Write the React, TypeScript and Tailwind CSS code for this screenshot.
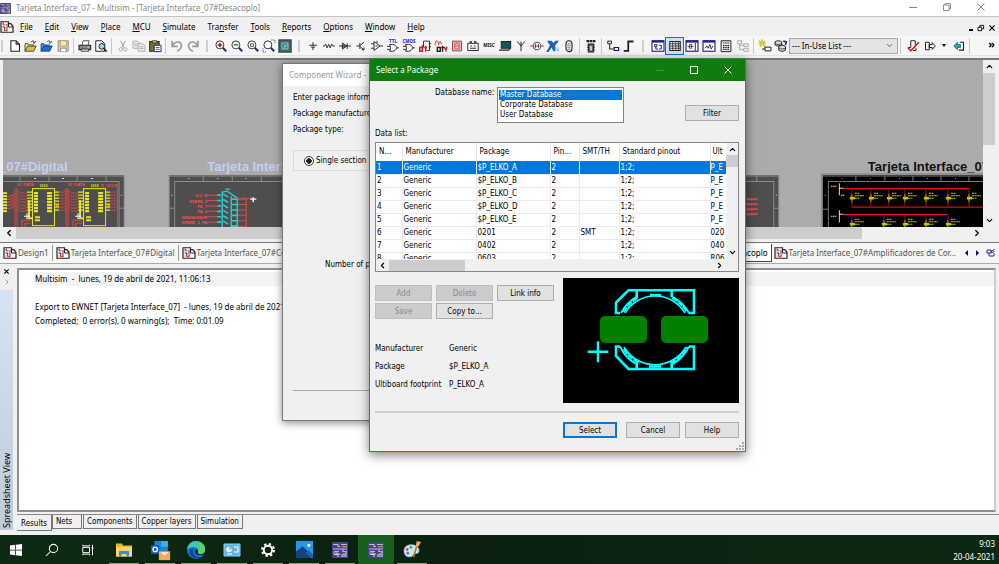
import type { ReactNode } from "react";
import { ChevronDown, ChevronLeft, ChevronRight, ChevronUp } from "lucide-react";

const menus = [
  ["", "F", "ile"],
  ["", "E", "dit"],
  ["", "V", "iew"],
  ["", "P", "lace"],
  ["", "M", "CU"],
  ["", "S", "imulate"],
  ["Tra", "n", "sfer"],
  ["", "T", "ools"],
  ["", "R", "eports"],
  ["", "O", "ptions"],
  ["", "W", "indow"],
  ["", "H", "elp"],
];

const packages = [
  { id: 1, name: "$P_ELKO_A", smt: "", ult: "P_E" },
  { id: 2, name: "$P_ELKO_B", smt: "", ult: "P_E" },
  { id: 3, name: "$P_ELKO_C", smt: "", ult: "P_E" },
  { id: 4, name: "$P_ELKO_D", smt: "", ult: "P_E" },
  { id: 5, name: "$P_ELKO_E", smt: "", ult: "P_E" },
  { id: 6, name: "0201", smt: "SMT", ult: "020" },
  { id: 7, name: "0402", smt: "", ult: "040" },
  { id: 8, name: "0603", smt: "", ult: "R06" },
];

const ui = "font-['Noto_Sans','Open_Sans',sans-serif]";
const tahoma = "font-['DejaVu_Sans_Condensed','DejaVu_Sans',sans-serif]";

function Svg({ children, className = "size-4" }: { children: ReactNode; className?: string }) {
  return (
    <svg viewBox="0 0 16 16" fill="none" stroke="#222" strokeWidth="1" className={`overflow-visible ${className}`} aria-hidden="true">
      {children}
    </svg>
  );
}

function Tool({ label, wide, on, children }: { label: string; wide?: boolean; on?: boolean; children: ReactNode }) {
  return (
    <button
      type="button"
      aria-label={label}
      className={`flex h-4 shrink-0 items-center justify-center ${wide ? "w-[17px]" : "w-4"} ${
        on ? "bg-[#cce4f7] outline outline-[#0078d7]" : ""
      }`}
    >
      <Svg className="size-3">{children}</Svg>
    </button>
  );
}

const Sep = () => <span className="mr-[3px] ml-[2px] h-4 w-0 shrink-0 border-l border-[#c8c8c8]" />;
const Grip = () => <span className="mx-[5px] h-3 w-[2px] shrink-0 bg-[#cfcfcf]" />;

function Lens({ mark, children }: { mark?: string; children?: ReactNode }) {
  return (
    <>
      <path d="M10 10l5 5" stroke="#1c2a8c" strokeWidth="2.6" />
      <circle cx="6.5" cy="6.5" r="5.3" fill="#fff" stroke="#333" strokeWidth="1.3" />
      {mark && <path d={mark} strokeWidth="2" stroke="#b01020" />}
      {children}
    </>
  );
}

function Gate({ text }: { text: string }) {
  return (
    <>
      <text x="8" y="4" fontSize="6" fontWeight="bold" textAnchor="middle" fill="#1010e0" stroke="none">
        {text}
      </text>
      <path d="M3.5 6h4c3 0 5 2 5.500 4.500-1 2.500-3 4.500-5.500 4.500h-4c1.500-3 1.500-6 0-9zM0 8.500h4M0 12.500h4M13 10.500h3" strokeWidth="1.200" />
    </>
  );
}

function Win({ children }: { children: ReactNode }) {
  return (
    <>
      <rect x="0" y="1" width="16" height="14" fill="#fff" stroke="#23238e" strokeWidth="1.5" />
      <path d="M0 2h16" stroke="#23238e" strokeWidth="3" />
      {children}
    </>
  );
}

function SheetIcon() {
  return (
    <Svg className="size-3 shrink-0">
      <path d="M0 1h10v2.500h3l3 3.500v8H0z" fill="#fff" strokeWidth="1.600" />
      <path d="M10 3.500V8h6" strokeWidth="1.300" />
      <path d="M2 5h4M8 4v5M4 13h4V9" stroke="#e01818" strokeWidth="1.500" />
      <path d="M2 3h2M2 8h3v4M2 12h1" strokeWidth="1.300" />
    </Svg>
  );
}

function MultisimIcon({ className }: { className: string }) {
  return (
    <Svg className={className}>
      <rect width="16" height="16" rx="1" fill="#4a4283" stroke="none" />
      <path d="M1 2.500h5v2h2M9 2.500h6M1 7h14M11 7v2M2 9.500h5" stroke="#b9b6e2" strokeWidth="1.100" />
      <path d="M2 12.500h3v-2M6 15v-3h2M10 15v-3M12 15v-4M14 15v-5" stroke="#d4d2f2" strokeWidth="1.100" />
      <path d="M10 4.700h5M1 11h4M10 9.500h5" stroke="#d9a860" strokeWidth="1" />
    </Svg>
  );
}

function Toolbar() {
  return (
    <div className="flex h-5 shrink-0 items-center overflow-hidden border-b border-[#e2e2e2] bg-[#f6f6f6]">
      <span className="mr-1 ml-px h-3 w-[2px] shrink-0 bg-[#cfcfcf]" />
      <Tool label="New">
        <path d="M2.500 1h7l4.500 4.500V15H2.500zM9.500 1v4.500H14" fill="#fff" strokeWidth="1.400" />
      </Tool>
      <Tool label="Open">
        <path d="M0 15V5h4l1 1.500h6V8" fill="#ffef7a" />
        <path d="M0 15l3.500-7H15l-3.500 7z" fill="#d8c040" />
        <path d="M8 3c2-3 4-1.500 5 .5l1.500-2M13 4h-2.500" strokeWidth="1.300" />
      </Tool>
      <Tool label="Open sample">
        <path d="M0 15V5h4l1 1.500h6V8" fill="#4f95e8" stroke="#123a80" />
        <path d="M0 15l3.500-7H15l-3.500 7z" fill="#1d6ad0" stroke="#123a80" />
        <path d="M8 3c2-3 4-1.500 5 .5l1.500-2M13 4h-2.500" stroke="#123a80" strokeWidth="1.300" />
      </Tool>
      <Tool label="Save">
        <path d="M1.500 1h13.500v14H1.500z" fill="#cfcfc0" stroke="#777" />
        <path d="M4.500 1h8v7h-8z" fill="#fff46b" stroke="#999" />
        <path d="M5 15v-4h7v4" fill="#fff" stroke="#777" />
      </Tool>
      <Sep />
      <Tool label="Print">
        <path d="M4 7l1.500-6H13.500L12 7" fill="#fff" />
        <path d="M0 7h15.500v6H0z" fill="#8a8a80" strokeWidth="1.400" />
        <path d="M3 12h10v3H3z" fill="#ddd" />
        <path d="M11 9.500h3" stroke="#e5d640" strokeWidth="1.500" />
      </Tool>
      <Tool label="Print preview">
        <path d="M1 1h8l4 4v10H1z" fill="#fff" strokeWidth="1.300" />
        <circle cx="9" cy="8.500" r="3.800" fill="#9adbe0" strokeWidth="1.300" />
        <path d="M11.500 11l4 4.500" strokeWidth="2.200" />
      </Tool>
      <Sep />
      <Tool label="Cut">
        <path d="M5 1l4.500 9M11 1L6.500 10" stroke="#999" strokeWidth="1.300" />
        <circle cx="5" cy="12.500" r="2.300" stroke="#999" />
        <circle cx="11" cy="12.500" r="2.300" stroke="#999" />
      </Tool>
      <Tool label="Copy">
        <path d="M0 1.500h6L8.500 4v7H0zM2 5h4M2 7.500h4" fill="#eee" stroke="#999" />
        <path d="M7 5h6l3 2.500V15H7zM9 9h5M9 11.500h5" fill="#eee" stroke="#999" />
      </Tool>
      <Tool label="Paste">
        <path d="M1 2h12.500v13H1z" fill="#7b7428" strokeWidth="1.400" />
        <path d="M4.500 1h6v3h-6z" fill="#e8d94a" />
        <path d="M7 7h9v8.500H7z" fill="#fff" stroke="#1c2a8c" strokeWidth="1.300" />
        <path d="M9 10h5M9 12.500h5" stroke="#1c2a8c" />
      </Tool>
      <Sep />
      <Tool label="Undo">
        <path d="M1.500 1v7.500H9M2 8c3-7 11-7 12-.5 0 3.500-2 5.500-6 7.500" stroke="#9a9a9a" strokeWidth="2.200" />
      </Tool>
      <Tool label="Redo">
        <path d="M14.500 1v7.500H7M14 8C11 1 3 1 2 7.500c0 3.500 2 5.500 6 7.500" stroke="#9a9a9a" strokeWidth="2.200" />
      </Tool>
      <Grip />
      <Tool label="Zoom in">
        <Lens mark="M3.500 6.500h6M6.500 3.500v6" />
      </Tool>
      <Tool label="Zoom out">
        <Lens>
          <path d="M3.500 6.500h6" stroke="#1c8c2c" strokeWidth="2" />
        </Lens>
      </Tool>
      <Tool label="Zoom area">
        <Lens>
          <path d="M4.500 5h4v3.500h-4z" />
        </Lens>
      </Tool>
      <Tool label="Zoom sheet">
        <Lens />
        <path d="M11 0h5v5M0 11v5h5" strokeDasharray="1.500 1" />
      </Tool>
      <Tool label="Full screen">
        <rect x="0" y="0" width="16" height="16" fill="#3c6f70" strokeWidth="2" stroke="#444" />
        <path d="M4 4h8v8H4zM7 12V7h5M7 9h3" stroke="#a7e3e0" />
      </Tool>
      <Grip />
      <Tool label="Place source">
        <path d="M3 7h10M5.500 9.500h5M8 3v4M8 9.500v4" strokeWidth="1.300" />
      </Tool>
      <Tool label="Place basic">
        <path d="M0 8h2l1.500-2.500 2 5 2-5 2 5 2-5 1.500 2.500h3" strokeWidth="1.200" />
      </Tool>
      <Tool label="Place diode">
        <path d="M0 8h16M4.500 4v8l6-4zM11 4v8" strokeWidth="1.200" fill="#888" />
      </Tool>
      <Tool label="Place transistor">
        <path d="M2 8h4M6.500 4v8M7 7l5-4M7 9l5 4M9 13h3v-3" strokeWidth="1.300" />
      </Tool>
      <Tool label="Place analog">
        <path d="M4 2v12l8-6zM0 5h4M0 11h4M12 8h4M6 8h3M8 1v3" strokeWidth="1.200" />
      </Tool>
      <Tool label="Place TTL">
        <Gate text="TTL" />
      </Tool>
      <Tool label="Place CMOS">
        <Gate text="CMOS" />
      </Tool>
      <Tool label="Place misc digital">
        <path d="M6 10V1.500h8V14h-3M13 5h3M13 9h3" strokeWidth="1.200" />
        <path d="M4.500 7v8H1v-5h3.500M9 8v7.500M7 10h3.500" stroke="#e01818" strokeWidth="2" />
      </Tool>
      <Tool label="Place mixed">
        <path d="M0 7c1-8 4-8 5 0M5 5l2-3 2 4" stroke="#e01818" strokeWidth="1.200" />
        <path d="M3 10h4v5H3zM10 8v7.500M8.500 10h3.500" strokeWidth="1.800" />
        <path d="M12.500 9l2 5 1.500-5" stroke="#e01818" strokeWidth="1.800" />
      </Tool>
      <Tool label="Place indicator">
        <path d="M2 1.500h12v13H2z" fill="#f7b8b8" stroke="#443030" />
        <path d="M5 4h6v8H5zM5 8h6" stroke="#e05050" strokeWidth="1.200" />
      </Tool>
      <Tool label="Place power">
        <path d="M1 4.500h14V14H1zM4 4V2h2v2M10 4V2h2v2M4.500 8h2M9.500 8h2M4 11h8" strokeWidth="1.200" />
      </Tool>
      <Tool label="Place misc">
        <text x="8" y="9" fontSize="6" fontWeight="bold" textAnchor="middle" fill="#111" stroke="none">
          MISC
        </text>
      </Tool>
      <Tool label="Place peripheral">
        <path d="M3 2h12.500v9H3z" fill="#0b5a5e" strokeWidth="1.400" />
        <path d="M0 13.500h13l2-2.500" strokeWidth="1.600" />
      </Tool>
      <Tool label="Place RF">
        <path d="M8 15V2M3 2l5 6 5-6" strokeWidth="1.300" />
      </Tool>
      <Tool label="Place electromechanical">
        <path d="M-1 8h4M13 8h4" stroke="#e01818" strokeWidth="1.300" />
        <circle cx="8" cy="8" r="5" stroke="#555" strokeWidth="1.400" />
        <path d="M5 8h6M6 5.500v5M10 5.500v5" />
      </Tool>
      <Tool label="Place NI">
        <path d="M0 1h6l2.500 3L11 1h5l-5 6v8H8.500L6 10l-4 6H-1l5-9z" fill="#1d62b8" stroke="none" />
        <path d="M11 15v-5l4 5v-5" stroke="#6d9ed8" />
      </Tool>
      <Tool label="Place connector">
        <rect x="4" y="1" width="8" height="14.500" rx="4" strokeWidth="1.400" />
        <path d="M6.800 4v9M9.200 4v9" strokeDasharray="1.500 1" />
      </Tool>
      <Sep />
      <Tool label="Place MCU">
        <path d="M2 1.500h12" strokeWidth="3" strokeDasharray="3.500 .7" />
        <path d="M4.500 5.500h7V16h-7zM3 7h1M3 10h1M3 13h1M12 7h1M12 10h1M12 13h1" fill="#666" strokeWidth="1.400" />
        <path d="M8 8v6" stroke="#fff" strokeWidth="1.800" />
      </Tool>
      <Sep />
      <Tool label="Hierarchical block">
        <path d="M1 1.500h5v3.500H1zM3.500 5v7H9" strokeWidth="1.300" />
        <path d="M9.500 10h6v4h-6z" stroke="#1010a0" strokeWidth="1.500" />
      </Tool>
      <Tool label="Bus">
        <path d="M1 14.500h6V2h7" strokeWidth="2.400" />
      </Tool>
      <Grip />
      <Tool label="Design toolbox" wide>
        <Win>
          <path d="M3.500 6h3v3h-3zM5 9v3h3M9 7h3.500v5H9" strokeWidth="1.200" />
        </Win>
      </Tool>
      <Tool label="Spreadsheet view" wide on>
        <path d="M1 2h14v12H1z" fill="#fff" strokeWidth="1.400" />
        <path d="M1 5h14M1 8h14M1 11h14M5 2v12M9 2v12M12.500 2v12" strokeWidth="1.100" />
      </Tool>
      <Tool label="Database manager" wide>
        <Win>
          <path d="M2 8.500h8M4.500 6v5h3V6z" />
          <path d="M12.500 4v11" stroke="#e01818" strokeWidth="1.600" />
        </Win>
      </Tool>
      <Tool label="Grapher" wide>
        <Win>
          <path d="M3 11l2-3 2 3 2-5 2 6 2-4" strokeWidth="1.200" />
        </Win>
      </Tool>
      <Tool label="Postprocessor" wide>
        <path d="M1.500 1h13v14.500h-13z" fill="#eee" strokeWidth="1.300" />
        <path d="M4 4h8M4 7.500h8M4 10h8M4 12.500h8" strokeDasharray="2 1" strokeWidth="1.500" />
      </Tool>
      <Tool label="Parent sheet" wide>
        <path d="M1 1h5v4H1zM9 5h6v3.500H9zM9 11h6v4H9zM3.500 5v8H9M3.500 7H9" stroke="#aaa" strokeWidth="1.300" />
      </Tool>
      <Sep />
      <Tool label="Create component">
        <path d="M0 1l3 3M8 1L5 4M4-1v4M-1 5h10M1 9l2.500-3M8 9L5.500 6" stroke="#c9b800" strokeWidth="1.600" />
        <path d="M8 9.500h8v5H8zM4 12h4" strokeWidth="1.300" />
      </Tool>
      <Tool label="Database">
        <path d="M0 2.500c2-2 7-2 9 0v4c-2 2-7 2-9 0zM5 8.500c2-2 7-2 9 0v5c-2 2-7 2-9 0z" fill="#ddd" strokeWidth="1.300" />
        <path d="M0 4.500c2 2 7 2 9 0M5 10.500c2 2 7 2 9 0" />
        <path d="M11 1.500l4 1-1 4" stroke="#1c2a8c" strokeWidth="2.200" />
      </Tool>
      <label className="relative flex w-[109px] shrink-0 items-center">
        <select
          aria-label="In-Use List"
          className="h-4 w-full appearance-none border border-[#a8a8a8] bg-[#e3e3e3] pl-[2px] text-[8px] leading-[13px] text-black"
        >
          <option>--- In-Use List ---</option>
        </select>
        <ChevronDown className="pointer-events-none absolute right-1 size-[9px] text-[#444]" />
      </label>
      <Sep />
      <Tool label="Electrical rules check" wide>
        <path d="M5 1h6v8M5 1v9H2M8 14h4v-3" strokeWidth="1.300" />
        <path d="M1 10l4 4.500L16 3" stroke="#e01818" strokeWidth="2" />
      </Tool>
      <Tool label="Transfer to Ultiboard" wide>
        <path d="M2 3h5v10H2zM7 6h4V3.500L15 8l-4 4.500V10H7z" strokeWidth="1.300" />
      </Tool>
      <span className="mx-1 border-x-2 border-t-3 border-x-transparent border-t-black" />
      <Tool label="Back annotate" wide>
        <path d="M1 8l5-5v3h4v4H6v3z" fill="#1da3a8" stroke="#0c6b70" />
        <path d="M9 3h5v10.500H8" strokeWidth="1.400" />
      </Tool>
      <Sep />
      <button type="button" aria-label="More buttons" className="mr-1 ml-auto shrink-0 pb-1 text-[11px] leading-3 font-bold">
        »
      </button>
    </div>
  );
}

function Chip({ x }: { x: number }) {
  const pins = [0, 1, 2, 3, 4, 5, 6];
  return (
    <g>
      <text x={x - 15} y="186" fontSize="4" fontWeight="bold" fill="#ff4d4d">
        DI_DATA
      </text>
      <text x={x + 8} y="187" fontSize="4" fontWeight="bold" fill="#e5e526">
        U12
      </text>
      <path d={`M${x - 17} 188v39M${x - 15} 188v39`} stroke="#e04848" />
      {pins.map((p) => (
        <g key={p}>
          <path d={`M${x - 15} ${190 + p * 3}l3 3h7`} stroke="#e04848" fill="none" strokeWidth=".8" />
          <path d={`M${x - 5} ${192 + p * 3}h5M${x + 22} ${192 + p * 3}h5`} stroke="#e5e526" strokeWidth="1.200" />
          <path d={`M${x + 27} ${192 + p * 3}h5l3 -2`} stroke="#e04848" fill="none" strokeWidth=".8" />
          <path d={`M${x + 2} ${193 + p * 3}h4M${x + 15} ${193 + p * 3}h5`} stroke="#e5e526" strokeWidth="2.400" />
        </g>
      ))}
      <rect x={x + 0.5} y="188.500" width="22" height="37" fill="none" stroke="#e5e526" />
      <path d={`M${x - 3} 200v18h3M${x + 3} 217h5M${x + 3} 220h5`} stroke="#e5e526" fill="none" strokeWidth="2" />
      <path d={`M${x - 5} 213v4M${x - 8} 216h6M${x - 6} 218h2`} stroke="#fff" />
      <path d={`M${x - 10} 227v-7h8M${x - 7} 227v-4h6`} stroke="#e04848" fill="none" />
      <path d={`M${x + 24} 205h3v3h-3z`} fill="#f0a020" />
    </g>
  );
}

function Cap({ x, y }: { x: number; y: number }) {
  return (
    <g stroke="#c8c800">
      <path d={`M${x} ${y - 9}v17`} stroke="#a01010" />
      <path d={`M${x - 2} ${y}h5`} strokeWidth="2.600" />
      <path d={`M${x} ${y - 4}v8`} strokeWidth=".8" />
      <path d={`M${x + 3} ${y - 5}h5`} strokeDasharray="2 .5" />
      <path d={`M${x + 3} ${y - 2.500}h9M${x + 3} ${y}h5`} strokeDasharray="2 .5" />
    </g>
  );
}

// open schematic sheets, seen side by side on the workspace canvas
function Workspace() {
  return (
    <svg
      viewBox="3 60 979 167"
      preserveAspectRatio="xMinYMin slice"
      className="block h-[167px] w-full bg-[#ababab]"
      role="img"
      aria-label="Schematic workspace"
      fontFamily="Liberation Sans, Arial, sans-serif"
    >
      <text x="-1" y="171" fontSize="13" fontWeight="bold" fill="#c5cfee">
        _07#Digital
      </text>
      <text x="207" y="171" fontSize="13" fontWeight="bold" fill="#c5cfee">
        Tarjeta Interface
      </text>
      <rect x="3" y="175" width="121" height="54" fill="#4e4e4e" />
      <path d="M3 176h121M3 181.500h116v48M124 176v54M20 176v5M49 176v5M77 176v5M106 176v5M119 208h5" stroke="#8c8c8c" fill="none" />
      <path d="M34 178.500h2M62 178.500h2M91 178.500h2M121 195h1" stroke="#ddd" />
      {[0, 1, 2, 3, 4, 5, 6].map((p) => (
        <path key={p} d={`M3 ${193 + p * 3}h4`} stroke="#e5e526" strokeWidth="2" />
      ))}
      <path d="M7 196h4l4-3M7 199h4l4-3M7 202h4l4-3M7 205h4l4-3M7 208h4l4-3" stroke="#e04848" fill="none" />
      <Chip x={32} />
      <Chip x={83} />
      <path d="M117.500 186v41" stroke="#e04848" />
      <text x="101" y="187" fontSize="4" fontWeight="bold" fill="#ff4d4d">
        D_VCCR
      </text>

      <rect x="169" y="175" width="609" height="54" fill="#4e4e4e" />
      <path d="M169 176h609M174.500 229v-47.500H773v47.500M169 175v54M778 175v54M203 176v5M232 176v5M261 176v5M756 176v5M169 208h5M773 208h5" stroke="#8c8c8c" fill="none" />
      <path d="M188 178.500h1M217 178.500h1M245 178.500h1M171 195h1M775 195h1" stroke="#ddd" />
      {["D.1_N", "SPARE_0", "PA_7", "PA_6", "GND/AGND/R", "SPARE_2_PA"].map((t, i) => (
        <g key={t}>
          <text x="207" y={197 + i * 5.4} fontSize="4" fontWeight="bold" textAnchor="end" fill="#ff4d4d">
            {t}
          </text>
          <path d={`M207 ${195 + i * 5.4}h10M238 ${199 + i * 5.4}h8`} stroke="#e04848" />
          <path d={`M217 ${195 + i * 5.4}h4M223 ${194 + i * 5.4}l5 3M231 ${199 + i * 5.4}h7`} stroke="#35c9cf" strokeWidth="1.600" />
        </g>
      ))}
      <path d="M222 227v-35l5-1 10 7v29M231 196v31M225 189h5" stroke="#35c9cf" fill="none" strokeWidth="1.400" />
      <path d="M235 198h16M246 198v29" stroke="#e04848" fill="none" />
      <path d="M250 199h6M253 197v5" stroke="#fff" strokeWidth="1.400" />
      <path d="M746 199h6M746 204h6M746 209h6M746 214h6" stroke="#ff4d4d" strokeWidth="2" strokeDasharray="3 .6" />
      <path d="M752 199h5M752 204h5M752 209h5M752 214h5" stroke="#e04848" strokeWidth="1.600" />

      <text x="867" y="171" fontSize="13" fontWeight="bold" fill="#111">
        Tarjeta Interface_07
      </text>
      <rect x="820" y="173" width="170" height="60" fill="#8f8f8f" />
      <rect x="822" y="175" width="170" height="54" fill="#000" />
      <path d="M822 176h160M827.500 229v-47.500H982M855 176v5M884 176v5M912 176v5M940 176v5M968 176v5M822 209h5" stroke="#777" fill="none" />
      <path d="M841 178.500h1M869 178.500h1M898 178.500h1M926 178.500h1M954 178.500h1M824 195h1" stroke="#999" />
      <path d="M830 186h6M840 195h4M830 216h6" stroke="#ddd" strokeDasharray="1.500 .5" />
      <path d="M838.500 183v12M838.500 210v12M839 188h4M839 214h4" stroke="#ddd" />
      <path d="M842 188.500h126.500M842 214.500h105" stroke="#ff1010" strokeWidth="1.400" />
      <path d="M851 207h131" stroke="#a00808" strokeWidth="1.800" />
      {[851, 870, 888, 904, 925, 947, 968].map((x) => (
        <Cap key={x} x={x} y={198} />
      ))}
      {[851, 883, 904, 925, 947].map((x) => (
        <Cap key={x} x={x} y={224} />
      ))}
    </svg>
  );
}

function SheetTab({ children }: { children: ReactNode }) {
  return (
    <button type="button" className="flex h-4 shrink-0 items-center gap-[2px] border-r border-[#999] pr-[3px] pl-1 text-[#555]">
      <SheetIcon />
      <span>{children}</span>
    </button>
  );
}

function WizardWindow() {
  return (
    <section className="absolute top-[63px] left-[282px] w-[420px] border border-[#777] bg-[#f0f0f0] leading-4 shadow-[0_2px_8px_rgba(0,0,0,0.45)]">
      <h2 className="h-[22px] bg-white pl-[6px] leading-[22px] text-[#999]">Component Wizard -</h2>
      <div className={`${tahoma} h-[334px] px-[10px] pt-1`}>
        <p>Enter package information</p>
        <p>Package manufacturer:</p>
        <p>Package type:</p>
        <fieldset className="mt-3 flex h-[21px] items-center border border-[#dcdcdc] pl-[10px]">
          <label className="flex items-center gap-[2px]">
            <input
              type="radio"
              defaultChecked
              className="size-[10px] appearance-none rounded-full border border-[#333] bg-white bg-[radial-gradient(circle,#222_2.5px,transparent_3px)]"
            />
            Single section component
          </label>
        </fieldset>
        <p className="mt-[86px] pl-8">Number of pins:</p>
        <hr className="mt-[117px] border-[#a8a8a8]" />
      </div>
    </section>
  );
}

function DialogButton({ children, disabled, main }: { children: ReactNode; disabled?: boolean; main?: boolean }) {
  return (
    <button
      type="button"
      disabled={disabled}
      className={`h-4 text-center ${
        disabled
          ? "border border-[#bfbfbf] bg-[#cccccc] leading-[13px] text-[#8a8a8a]"
          : main
            ? "mr-1 border-2 border-[#0078d7] bg-[#e1e1e1] leading-[11px]"
            : "border border-[#adadad] bg-[#e1e1e1] leading-[13px]"
      }`}
    >
      {children}
    </button>
  );
}

function Footprint() {
  return (
    <svg viewBox="563 279 176 125" className="h-[125px] w-[176px] bg-black" role="img" aria-label="Footprint preview" fill="none" stroke="#00ffff" strokeWidth="2.600">
      <path d="M620 314h-4v-10.500l12.500-12.200h65.500v22.700h-5.500" />
      <path d="M620 347.500h-4v9.500l12.500 13h65.500v-22.500h-5" />
      <path d="M636.700 291v8M671.700 291v7M636.700 362v8M671.700 362v8" />
      <path d="M625 314A35 35 0 0 1 685 314M624 348A36 36 0 0 0 686 348" strokeWidth="1.600" />
      <path d="M621 314A39 39 0 0 1 637 297.500M673 298A39 39 0 0 1 689 314M620 347.500A39 39 0 0 0 637 365.500M673 365A39 39 0 0 0 689 347.500" strokeWidth="1.800" />
      <path d="M623.500 313A37 37 0 0 1 638 298.500M672 298.500A37 37 0 0 1 687 313M624 350A37 37 0 0 0 640 364M671 364A37 37 0 0 0 687 348" strokeWidth="2.600" strokeDasharray="6 1" />
      <path d="M650 296h11M649 367.500h12" />
      <path d="M587.700 352.700h20.600M598 342.300v21" strokeWidth="2.400" />
      <rect x="600" y="317" width="47" height="27" rx="5" fill="#008000" stroke="none" />
      <rect x="661" y="317" width="47" height="27" rx="5" fill="#008000" stroke="none" />
    </svg>
  );
}

const cell = "truncate border-r border-b border-[#ececec] p-0 pt-px pl-px text-clip";
const headCell = "border-r border-[#e5e5e5] p-0 pl-[3px] font-normal";

function PackageDialog() {
  return (
    <section className={`${tahoma} absolute top-[58px] left-[369px] w-[377px] border border-[#2f8f2f] bg-[#f0f0f0] leading-[10px] text-black shadow-[0_3px_10px_rgba(0,0,0,0.5)]`}>
      <header className="flex h-[22px] items-center bg-[#107c10] pl-[6px] text-white">
        <h2 className={`${ui} flex-1`}>Select a Package</h2>
        <span className="mr-[26px] h-px w-2 bg-[#3f963f]" />
        <button type="button" aria-label="Maximize" className="mr-[26px] size-2 border border-white" />
        <button type="button" aria-label="Close" className="mr-[13px]">
          <Svg className="size-2">
            <path d="M1 1l14 14M15 1L1 15" stroke="#fff" strokeWidth="2" />
          </Svg>
        </button>
      </header>
      <div className="pr-[6px] pb-[13px] pl-[5px]">
        <div className="flex pt-[6px] pl-[60px]">
          <label htmlFor="database" className="w-[62px] shrink-0 pt-px whitespace-nowrap">
            Database name:
          </label>
          <select
            id="database"
            size={3}
            defaultValue="master"
            className="h-[36px] w-[127px] overflow-hidden border border-[#7a8590] bg-white px-px pt-[2px] outline-none"
          >
            <option
              value="master"
              className="h-[10px] min-h-0 p-0 pl-px leading-[10px] checked:bg-linear-to-r checked:from-[#0078d7] checked:to-[#0078d7] checked:[-webkit-text-fill-color:#fff]"
            >
              Master Database
            </option>
            <option value="corporate" className="h-[10px] min-h-0 p-0 pl-px leading-[10px]">
              Corporate Database
            </option>
            <option value="user" className="h-[10px] min-h-0 p-0 pl-px leading-[10px]">
              User Database
            </option>
          </select>
          <div className="mt-[18px] ml-auto grid w-[54px]">
            <DialogButton>Filter</DialogButton>
          </div>
        </div>
        <p className="mt-[6px]">Data list:</p>
        <div className="mt-[3px] border border-[#828790] bg-white">
          <div className="flex h-[116px]">
            <div className="min-w-0 flex-1 overflow-hidden">
              <table className="w-full table-fixed border-collapse">
                <thead>
                  <tr className="h-[18px] text-left">
                    <th className={`w-[26px] ${headCell}`}>N...</th>
                    <th className={`w-[74px] ${headCell}`}>Manufacturer</th>
                    <th className={`w-[74px] ${headCell}`}>Package</th>
                    <th className={`w-[29px] ${headCell}`}>Pin...</th>
                    <th className={`w-10 ${headCell}`}>SMT/TH</th>
                    <th className={`w-[91px] ${headCell}`}>Standard pinout</th>
                    <th className="overflow-hidden p-0 pl-[2px] font-normal">Ult</th>
                  </tr>
                </thead>
                <tbody>
                  {packages.map((p) => (
                    <tr key={p.id} className={`h-[13px] ${p.id === 1 ? "bg-[#0078d7] text-white" : ""}`}>
                      <td className={cell}>{p.id}</td>
                      <td className={cell}>Generic</td>
                      <td className={cell}>{p.name}</td>
                      <td className={cell}>2</td>
                      <td className={cell}>{p.smt}</td>
                      <td className={cell}>1;2;</td>
                      <td className="overflow-hidden border-b border-[#ececec] p-0 pt-px">{p.ult}</td>
                    </tr>
                  ))}
                </tbody>
              </table>
            </div>
            <div className="flex w-3 flex-col items-center bg-[#f0f0f0] py-[2px]">
              <ChevronUp className="size-[9px]" strokeWidth={3} />
              <span className="mt-px h-3 w-full bg-[#cdcdcd]" />
              <ChevronDown className="mt-auto size-[9px]" strokeWidth={3} />
            </div>
          </div>
          <div className="flex h-3 items-center bg-[#f0f0f0] pr-3 pl-[2px]">
            <ChevronLeft className="size-[9px]" strokeWidth={3} />
            <span className="ml-[2px] h-[11px] w-[76px] bg-[#cdcdcd]" />
            <ChevronRight className="mr-[2px] ml-auto size-[9px]" strokeWidth={3} />
          </div>
        </div>
        <div className="mt-[6px] flex justify-between">
          <div>
            <div className="mt-[7px] grid grid-cols-[57px_57px_57px] gap-x-1 gap-y-[2px]">
              <DialogButton disabled>Add</DialogButton>
              <DialogButton disabled>Delete</DialogButton>
              <DialogButton>Link info</DialogButton>
              <DialogButton disabled>Save</DialogButton>
              <DialogButton>Copy to...</DialogButton>
            </div>
            <dl className="mt-[25px] grid grid-cols-[74px_1fr] gap-y-2">
              <dt>Manufacturer</dt>
              <dd>Generic</dd>
              <dt>Package</dt>
              <dd>$P_ELKO_A</dd>
              <dt>Ultiboard footprint</dt>
              <dd>P_ELKO_A</dd>
            </dl>
          </div>
          <Footprint />
        </div>
        <hr className="mt-2 border-t-2 border-[#cfcfcf]" />
        <div className="mt-[9px] grid grid-cols-[58px_54px_54px] justify-end gap-[5px]">
          <DialogButton main>Select</DialogButton>
          <DialogButton>Cancel</DialogButton>
          <DialogButton>Help</DialogButton>
        </div>
      </div>
      <svg viewBox="0 0 9 9" className="absolute right-0 bottom-0 size-[9px]" fill="#aaa" aria-hidden="true">
        <path d="M6 0h2v2H6zM3 3h2v2H3zM6 3h2v2H6zM0 6h2v2H0zM3 6h2v2H3zM6 6h2v2H6z" />
      </svg>
    </section>
  );
}

function TaskButton({ label, open, active, children }: { label: string; open?: boolean; active?: boolean; children: ReactNode }) {
  return (
    <button
      type="button"
      aria-label={label}
      className={`flex h-[29px] w-9 shrink-0 items-center justify-center ${active ? "bg-[#15601c]" : ""} ${
        open ? "bg-[linear-gradient(#7ba57d,#7ba57d)] bg-[length:30px_1px] bg-[position:center_bottom] bg-no-repeat" : ""
      }`}
    >
      {children}
    </button>
  );
}

function Taskbar() {
  return (
    <footer className="flex h-[29px] shrink-0 items-center bg-[linear-gradient(90deg,#0e2a12,#0b2010_45%,#0d2812)] text-white">
      <div className="-ml-[2px] flex">
        <TaskButton label="Start">
          <Svg className="size-3">
            <path d="M0 2l7-1v6.500H0zM8 .9L16 0v7.500H8zM0 8.500h7V15l-7-1zM8 8.500h8V16l-8-1z" fill="#fff" stroke="none" />
          </Svg>
        </TaskButton>
        <TaskButton label="Search">
          <Svg className="size-3">
            <circle cx="10" cy="6" r="5.500" stroke="#fff" strokeWidth="1.400" />
            <path d="M6 10L0 16" stroke="#fff" strokeWidth="1.400" />
          </Svg>
        </TaskButton>
        <TaskButton label="Task view">
          <Svg className="size-3">
            <path d="M1 4.500h9v7H1zM1 1v1.500h9V1M1 15v-1.500h9V15M14 1v14" stroke="#fff" strokeWidth="1.300" />
            <path d="M13 4h2v3h-2z" fill="#fff" stroke="none" />
          </Svg>
        </TaskButton>
        <TaskButton label="File Explorer" open>
          <Svg className="size-4">
            <path d="M0 1.500h6l1 2h9v11H0z" fill="#f3b82c" stroke="none" />
            <path d="M0 5h16v9.500H0z" fill="#ffd75e" stroke="none" />
            <path d="M3 14.500V9h10v5.500h-2.500V12h-5v2.500z" fill="#3b8fd8" stroke="none" />
          </Svg>
        </TaskButton>
        <TaskButton label="Outlook" open>
          <Svg className="size-[18px]">
            <path d="M3 0h12v10H3z" fill="#1687d9" stroke="none" />
            <path d="M9 0h6v5H9z" fill="#36b1ee" stroke="none" />
            <path d="M0 3.500h7.500v8H0z" fill="#0a5fb4" stroke="none" />
            <circle cx="3.700" cy="7.500" r="2" stroke="#fff" strokeWidth="1.200" />
            <path d="M7 9.500h10V17H7z" fill="#f2a860" stroke="none" />
            <path d="M7 9.500l5 4 5-4z" fill="#ffe6c4" stroke="#e08a3c" strokeWidth=".6" />
          </Svg>
        </TaskButton>
        <TaskButton label="Edge" open>
          <Svg className="size-[18px]">
            <circle cx="8" cy="8" r="8" fill="#1576c8" stroke="none" />
            <path d="M0 7.500C.5 3 4 0 8 0c5 0 8 3.500 8 7 0 3-2 4.500-4.500 4.500-1.500 0-2.500-.6-2-1.500 1-1.500.5-4.500-3-4.500C3.500 5.500 1 6 0 7.500z" fill="#3fc6b6" stroke="none" />
            <path d="M10 .4c4 1 6 4 6 6.600 0 3-2 4.500-4.500 4.500-1.500 0-2.500-.6-2-1.500C11 7 12 3 10 .4z" fill="#5bd45a" stroke="none" />
            <path d="M6.500 6.500C4 8 5 14 11 14c2 0 3-.5 4-1.500-2 4-9 4.500-12 0-2-3 0-6.500 3.500-6z" fill="#0c4aa0" stroke="none" />
            <path d="M9.500 10c-.5 1.500 3 2.500 6 .8-1 2.700-8 2.200-8.300-1 0-1.500 1-2.500 2-2.300.6.600.7 1.700.3 2.500z" fill="#0b2010" stroke="none" />
          </Svg>
        </TaskButton>
        <TaskButton label="Control Panel" open>
          <Svg className="size-4">
            <path d="M0 2h16v12H0z" fill="#5cb6ea" stroke="#8fcdf2" />
            <circle cx="5" cy="7.500" r="2.800" fill="#e9f6ff" stroke="none" />
            <path d="M5 7.500V4.700a2.800 2.800 0 0 1 2.800 2.800z" fill="#f2a33a" stroke="none" />
            <path d="M10 5h4v5h-4M3 12h5" stroke="#fff" />
          </Svg>
        </TaskButton>
        <TaskButton label="Settings" open>
          <Svg className="size-[14px]">
            <circle cx="8" cy="8" r="4.800" stroke="#fff" strokeWidth="2.200" />
            <circle cx="8" cy="8" r="6.800" stroke="#fff" strokeWidth="2.400" strokeDasharray="2.700 2.640" />
          </Svg>
        </TaskButton>
        <TaskButton label="Photos" open>
          <Svg className="size-[17px]">
            <path d="M0 0h16v16H0z" fill="#2397e8" stroke="none" />
            <path d="M0 10l6-5 10 9v2H0z" fill="#14437f" stroke="none" />
            <path d="M9 11l3-2 4 4v3h-2z" fill="#1c62b0" stroke="none" />
            <circle cx="12" cy="4" r="1.500" fill="#fff" stroke="none" />
          </Svg>
        </TaskButton>
        <TaskButton label="Multisim" open>
          <MultisimIcon className="size-4" />
        </TaskButton>
        <TaskButton label="Multisim, active" active>
          <MultisimIcon className="size-4" />
        </TaskButton>
        <TaskButton label="Paint" open>
          <Svg className="size-[17px]">
            <path d="M0 9c0-4 4-6 8-5.500S15 7 14 10s-4 1-5 2.500S8 15 5 15s-5-2-5-6z" fill="#cfe6f5" stroke="#8fb6cf" strokeWidth=".6" />
            <circle cx="3" cy="8" r="1.300" fill="#e8483c" stroke="none" />
            <circle cx="6.500" cy="6" r="1.300" fill="#3ea64a" stroke="none" />
            <circle cx="3.500" cy="11.500" r="1.300" fill="#3b7fe0" stroke="none" />
            <path d="M9 15l3-10" stroke="#b87030" strokeWidth="1.600" />
            <path d="M11 5l1-5 4 1-2.500 4.500z" fill="#e6b25a" stroke="none" />
          </Svg>
        </TaskButton>
      </div>
      <p className="mr-1 ml-auto text-right leading-[13px]">
        9:03
        <br />
        20-04-2021
      </p>
    </footer>
  );
}

export default function App() {
  return (
    <div className={`${ui} relative flex min-h-screen flex-col overflow-hidden bg-[#f0f0f0] text-[8px] leading-3 text-black`}>
      <header className="flex h-[17px] shrink-0 items-center gap-[5px] border-b border-[#c4c4c4] bg-white text-[#888]">
        <MultisimIcon className="size-[11px]" />
        <h1 className="flex-1">Tarjeta Interface_07 - Multisim - [Tarjeta Interface_07#Desacoplo]</h1>
        <div className="flex items-center gap-[26px] pr-[14px] pb-[2px]">
          <button type="button" aria-label="Minimize" className="h-px w-2 bg-[#888]" />
          <button type="button" aria-label="Restore">
            <Svg className="size-2">
              <path d="M1 4h11v11H1zM4 4V1h11v11h-3" stroke="#777" strokeWidth="1.600" />
            </Svg>
          </button>
          <button type="button" aria-label="Close">
            <Svg className="size-2">
              <path d="M1 1l14 14M15 1L1 15" stroke="#777" strokeWidth="1.800" />
            </Svg>
          </button>
        </div>
      </header>

      <nav className="flex h-[19px] shrink-0 items-center pl-px">
        <SheetIcon />
        <ul className="flex gap-3 pl-[7px]">
          {menus.map(([before, key, after]) => (
            <li key={key + after}>
              <button type="button">
                {before}
                <u>{key}</u>
                {after}
              </button>
            </li>
          ))}
        </ul>
        <div className="ml-auto flex items-center gap-[5px] pt-[2px] pr-1">
          <button type="button" aria-label="Minimize sheet" className="mt-1 h-[2px] w-1 bg-black" />
          <button type="button" aria-label="Restore sheet">
            <Svg className="size-[6px]">
              <path d="M0 6h10v9H0zM5 6V1h10v9h-4" stroke="#000" strokeWidth="2.400" />
            </Svg>
          </button>
          <button type="button" aria-label="Close sheet">
            <Svg className="size-[6px]">
              <path d="M1 1l14 14M15 1L1 15" stroke="#000" strokeWidth="3" />
            </Svg>
          </button>
        </div>
      </nav>

      <Toolbar />

      <main className="flex flex-1 flex-col">
        <div className="mt-[2px] flex border-t-2 border-[#777] pl-[3px]">
          <div className="min-w-0 flex-1">
            <Workspace />
            <div className="flex h-3 items-center bg-[#f0f0f0]">
              <ChevronLeft className="ml-px size-[10px]" strokeWidth={3} />
              <span className="ml-[2px] h-full w-[846px] shrink-0 bg-[#cdcdcd]" />
              <ChevronRight className="mr-px ml-auto size-[10px]" strokeWidth={3} />
            </div>
          </div>
          <div className="mr-1 flex h-[167px] w-3 flex-col items-center bg-[#f0f0f0] py-[2px]">
            <ChevronUp className="size-[9px]" strokeWidth={3} />
            <span className="mt-[2px] h-[72px] w-full bg-[#cdcdcd]" />
            <ChevronDown className="mt-auto size-[9px]" strokeWidth={3} />
          </div>
        </div>

        <div className="mt-[3px] flex h-[22px] items-center border-y border-t-[#777] border-b-[#aaa] bg-[#f6f6f6]">
          <SheetTab>Design1</SheetTab>
          <SheetTab>Tarjeta Interface_07#Digital</SheetTab>
          <SheetTab>Tarjeta Interface_07#Comu</SheetTab>
          <div className="ml-auto flex shrink-0 items-center">
            <button type="button" className="h-[18px] border-r border-b border-[#444] bg-white pr-[3px]">
              Tarjeta Interface_07#Desacoplo
            </button>
            <button type="button" className="flex items-center gap-[2px] pl-[3px] text-[#555]">
              <SheetIcon />
              Tarjeta Interface_07#Amplificadores de Cor...
            </button>
            <span className="ml-[9px] border-y-3 border-r-3 border-y-transparent border-r-[#0a0a90]" />
            <span className="mx-2 border-y-3 border-l-3 border-y-transparent border-l-[#0a0a90]" />
            <Svg className="mr-[4px] size-[8px]">
              <path d="M0 2h8v6H0zM4 8v6h10V8M7 5l8-4M8 8l7-3" stroke="#2a2ab0" strokeWidth="2" />
            </Svg>
          </div>
        </div>

        <div className="flex flex-1 pt-1">
          <aside className="flex w-[13px] shrink-0 flex-col items-center pb-[5px]">
            <button type="button" aria-label="Close pane" className="pt-px">
              <Svg className="size-[5px]">
                <path d="M1 1l14 14M15 1L1 15" stroke="#000" strokeWidth="3.500" />
              </Svg>
            </button>
            <ChevronRight className="mt-1 size-2 text-[#777]" />
            <div className="mt-1 flex w-full flex-1 items-end justify-center bg-linear-to-b from-[#d6e3f1] to-[#bfcbda] pb-[2px]">
              <span className="rotate-180 text-[9px] [writing-mode:vertical-rl]">Spreadsheet View</span>
            </div>
          </aside>
          <section className="ml-1 flex min-w-0 flex-1 flex-col">
            <div className="mr-[3px] flex-1 border-2 border-[#909090] border-r-[#ccc] bg-white pt-[2px] pl-4 leading-[14px] whitespace-pre">
              <p className="bg-[#f4f4f4]">{"Multisim  -  lunes, 19 de abril de 2021, 11:06:13"}</p>
              <p className="pt-[14px]">{"Export to EWNET [Tarjeta Interface_07]  - lunes, 19 de abril de 2021"}</p>
              <p>{"Completed;  0 error(s), 0 warning(s);  Time: 0:01.09"}</p>
            </div>
            <div className={`${tahoma} mt-[2px] flex h-[21px] items-start border-t border-[#888]`}>
              <button type="button" className="h-4 border-r border-b border-[#777] px-1 pt-[3px] leading-3">
                Results
              </button>
              {["Nets", "Components", "Copper layers", "Simulation"].map((tab) => (
                <button key={tab} type="button" className="mr-px h-[14px] min-w-[30px] border-r border-b border-l border-[#777] px-[3px] pt-px text-left">
                  {tab}
                </button>
              ))}
            </div>
          </section>
        </div>
      </main>

      <Taskbar />

      <WizardWindow />
      <PackageDialog />
    </div>
  );
}
